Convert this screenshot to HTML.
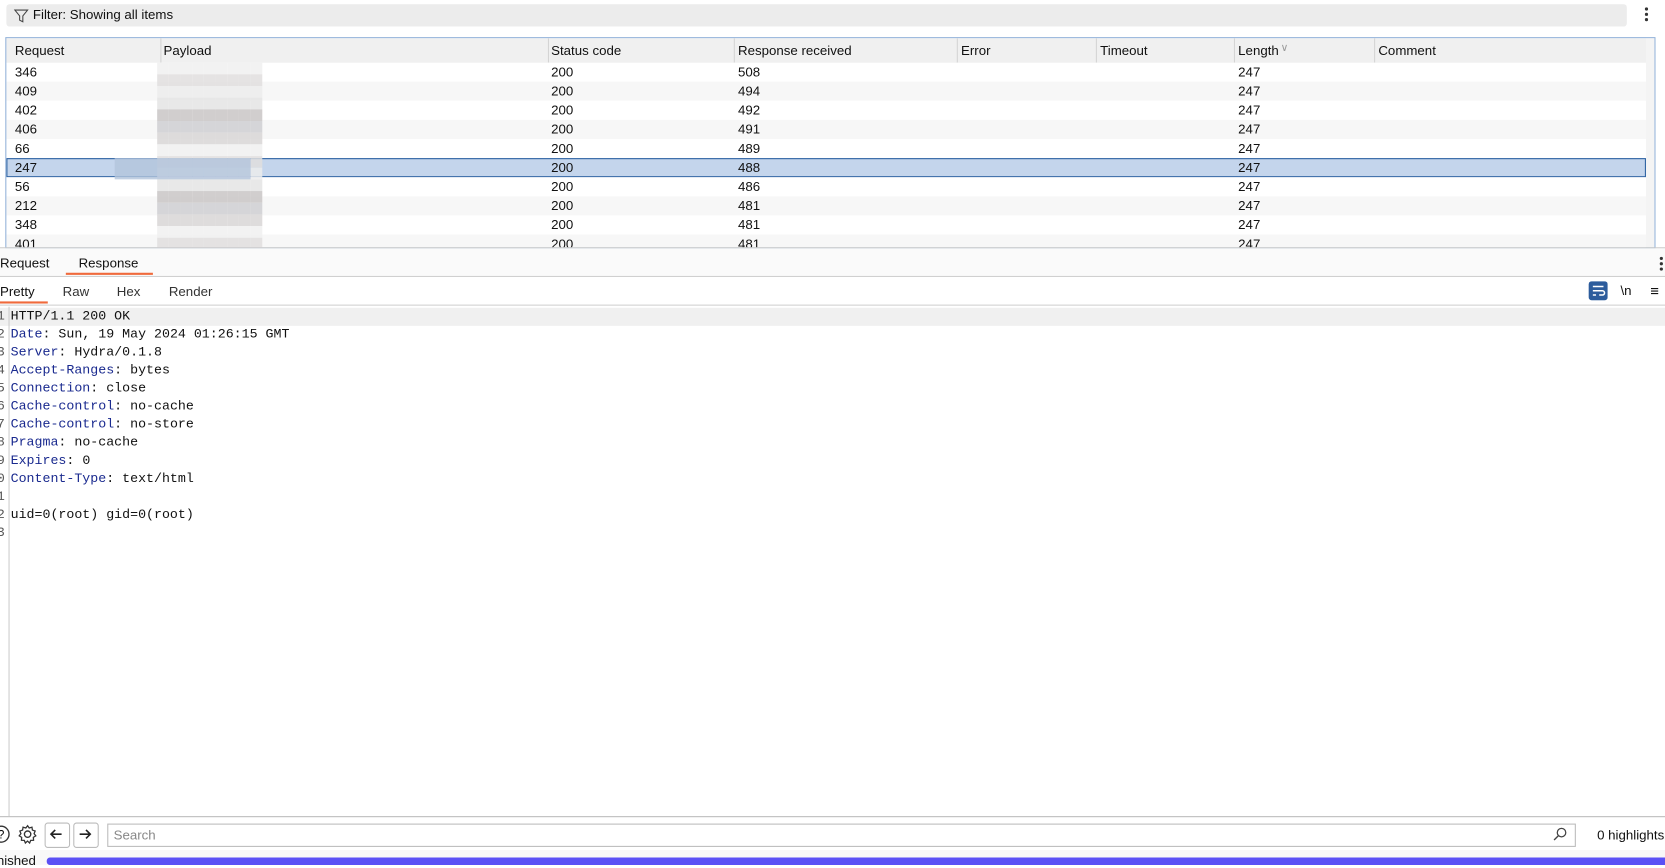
<!DOCTYPE html>
<html><head><meta charset="utf-8"><style>
html,body{margin:0;padding:0;background:#fff;overflow:hidden;width:1665px;height:865px}
#w{position:absolute;left:0;top:0;width:1568px;height:815px;transform:scale(1.0619,1.0613);transform-origin:0 0;font-family:"Liberation Sans",sans-serif;font-size:12.5px;color:#111}
.a{position:absolute}
.mono{font-family:"Liberation Mono",monospace;font-size:12.5px}
.k{color:#1a2a8f}
</style></head><body><div id="w">
<div class="a" style="left:6px;top:4px;width:1526px;height:21px;background:#ececec;border-radius:3px"></div>
<svg class="a" style="left:13px;top:8px" width="14" height="14" viewBox="0 0 14 14"><path d="M1 1.5h12L8.5 7v5.5L5.5 11V7z" fill="none" stroke="#444" stroke-width="1"/></svg>
<div class="a" style="left:31px;top:7px">Filter: Showing all items</div>
<div class="a" style="left:1549px;top:7px;width:3px"><div style="width:3px;height:3px;background:#333;border-radius:50%;margin-bottom:2px"></div><div style="width:3px;height:3px;background:#333;border-radius:50%;margin-bottom:2px"></div><div style="width:3px;height:3px;background:#333;border-radius:50%"></div></div>
<div class="a" style="left:5px;top:35px;width:1552px;height:197px;border:1px solid #8fb0d8;overflow:hidden;background:#fff">
 <div class="a" style="left:0;top:0;width:1544px;height:23px;background:#f0f0f0;border-bottom:1px solid #d8d8d8"></div>
 <div class="a" style="left:1544px;top:0;width:10px;height:197px;background:#f4f4f4"></div>
 <div id="rows"></div>
</div>
<div class="a" style="left:0;top:233px;width:1568px;height:1px;background:#c8c8c8"></div>
<div class="a" style="left:0;top:234px;width:1568px;height:26px;background:#fafafa"></div>
<div class="a" style="left:0;top:241px">Request</div>
<div class="a" style="left:74px;top:241px">Response</div>
<div class="a" style="left:62px;top:257px;width:82px;height:2px;background:#f06a3c"></div>
<div class="a" style="left:0;top:260px;width:1568px;height:1px;background:#d0d0d0"></div>
<div class="a" style="left:1563px;top:242px"><div style="width:3px;height:3px;background:#333;border-radius:50%;margin-bottom:2px"></div><div style="width:3px;height:3px;background:#333;border-radius:50%;margin-bottom:2px"></div><div style="width:3px;height:3px;background:#333;border-radius:50%"></div></div>
<div class="a" style="left:0;top:268px">Pretty</div>
<div class="a" style="left:59px;top:268px;color:#333">Raw</div>
<div class="a" style="left:110px;top:268px;color:#333">Hex</div>
<div class="a" style="left:159px;top:268px;color:#333">Render</div>
<div class="a" style="left:0;top:284px;width:45px;height:2px;background:#f06a3c"></div>
<div class="a" style="left:0;top:287px;width:1568px;height:1px;background:#d0d0d0"></div>
<svg class="a" style="left:1496px;top:265px" width="18" height="18" viewBox="0 0 18 18"><rect x="0" y="0" width="18" height="18" rx="3" fill="#2c5c9c"/><path d="M4 5h10M4 9h9a2 2 0 0 1 0 4h-3M4 13h3" stroke="#fff" stroke-width="1.4" fill="none"/></svg>
<div class="a" style="left:1526px;top:267px">\n</div>
<div class="a" style="left:1554px;top:266px;font-size:14px">≡</div>
<div class="a" style="left:0;top:290px;width:1568px;height:17px;background:#f0f0f0"></div>
<div class="a" style="left:8px;top:289px;width:1px;height:480px;background:#ccc"></div>
<div class="a mono" id="num" style="left:-3px;top:290px;line-height:17px;white-space:pre;color:#555"></div>
<div class="a mono" id="code" style="left:10px;top:290px;line-height:17px;white-space:pre"></div>
<div class="a" style="left:0;top:769px;width:1568px;height:1px;background:#bbb"></div>
<svg class="a" style="left:-8px;top:776px" width="18" height="20" viewBox="0 0 18 20"><circle cx="9" cy="10" r="7.5" fill="none" stroke="#333" stroke-width="1.3"/><text x="6" y="14" font-size="11" font-family="Liberation Sans">?</text></svg>
<svg class="a" style="left:16px;top:776px" width="20" height="20" viewBox="0 0 20 20"><circle cx="10" cy="10" r="3" fill="none" stroke="#333" stroke-width="1.3"/><path d="M10 2l1.5 2.2 2.6-.8.4 2.7 2.6.9-1 2.5 1.6 2.1-2.3 1.4.2 2.7-2.7.1-1 2.5-2-1.8-2 1.8-1-2.5-2.7-.1.2-2.7-2.3-1.4 1.6-2.1-1-2.5 2.6-.9.4-2.7 2.6.8z" fill="none" stroke="#333" stroke-width="1.2"/></svg>
<div class="a" style="left:42px;top:775px;width:22px;height:22px;border:1px solid #bbb;border-radius:3px"></div>
<div class="a" style="left:69px;top:775px;width:22px;height:22px;border:1px solid #bbb;border-radius:3px"></div>
<svg class="a" style="left:45px;top:778px" width="16" height="16"><path d="M13 8H3M7 4L3 8l4 4" fill="none" stroke="#222" stroke-width="1.5"/></svg>
<svg class="a" style="left:72px;top:778px" width="16" height="16"><path d="M3 8h10M9 4l4 4-4 4" fill="none" stroke="#222" stroke-width="1.5"/></svg>
<div class="a" style="left:101px;top:776px;width:1381px;height:20px;border:1px solid #bbb;background:#fff"></div>
<div class="a" style="left:107px;top:780px;color:#888">Search</div>
<svg class="a" style="left:1462px;top:779px" width="14" height="14"><circle cx="8.5" cy="5.5" r="4" fill="none" stroke="#444" stroke-width="1.2"/><path d="M5.5 8.5L1.5 12.5" stroke="#444" stroke-width="1.3"/></svg>
<div class="a" style="left:1504px;top:780px">0 highlights</div>
<div class="a" style="left:0;top:801px;width:1568px;height:14px;background:#f8f8f8"></div>
<div class="a" style="left:-3px;top:804px">nished</div>
<div class="a" style="left:44px;top:808px;width:1524px;height:7px;background:#5b50f5;border-radius:3px 0 0 3px"></div>
</div>
<script>
var cols=[[8,"Request"],[148,"Payload"],[513,"Status code"],[689,"Response received"],[899,"Error"],[1030,"Timeout"],[1160,"Length"],[1292,"Comment"]];
var borders=[145,510,685,895,1026,1156,1288];
var r=document.getElementById('rows');var h='';
cols.forEach(function(c){h+='<div class="a" style="left:'+c[0]+'px;top:5px;color:#111">'+c[1]+'</div>';});
h+='<div class="a" style="left:1200px;top:4px;color:#999;font-size:10px">&#8744;</div>';
borders.forEach(function(b){h+='<div class="a" style="left:'+b+'px;top:0;width:1px;height:23px;background:#d4d4d4"></div>';});
var data=[[346,508],[409,494],[402,492],[406,491],[66,489],[247,488],[56,486],[212,481],[348,481],[401,481]];
data.forEach(function(d,i){var y=23+i*18;var bg=i==5?'#c4d5ec':(i%2?'#f7f7f7':'#fff');
h+='<div class="a" style="left:0;top:'+y+'px;width:1544px;height:18px;background:'+bg+(i==5?';box-sizing:border-box;border:1px solid #2a5fa0':'')+'"></div>';
h+='<div class="a" style="left:8px;top:'+(y+2)+'px">'+d[0]+'</div><div class="a" style="left:513px;top:'+(y+2)+'px">200</div><div class="a" style="left:689px;top:'+(y+2)+'px">'+d[1]+'</div><div class="a" style="left:1160px;top:'+(y+2)+'px">247</div>';});
var g=['#e4e4e4','#d8d6d6','#ececec','#cfcfd2','#e0dede','#c9c6c6','#f0f0f0'];
for(var y=23;y<197;y+=11){for(var x=142;x<235;x+=11){var c=g[(x*7+y*3)%7];h+='<div class="a" style="left:'+x+'px;top:'+y+'px;width:11px;height:11px;background:'+c+';opacity:.85"></div>';}}
h+='<div class="a" style="left:102px;top:113px;width:128px;height:20px;background:#b3c4dc;opacity:.8"></div>';
r.innerHTML=h;
var L=[['HTTP/1.1 200 OK'],['Date',' Sun, 19 May 2024 01:26:15 GMT'],['Server',' Hydra/0.1.8'],['Accept-Ranges',' bytes'],['Connection',' close'],['Cache-control',' no-cache'],['Cache-control',' no-store'],['Pragma',' no-cache'],['Expires',' 0'],['Content-Type',' text/html'],[''],['uid=0(root) gid=0(root)'],['']];
var s='',n='';L.forEach(function(l,i){n+=String(i+1).slice(-1)+'\n';s+=(l.length>1?'<span class="k">'+l[0]+'</span>:'+l[1]:l[0])+'\n';});
document.getElementById('code').innerHTML=s;document.getElementById('num').textContent=n;
</script>
</body></html>
